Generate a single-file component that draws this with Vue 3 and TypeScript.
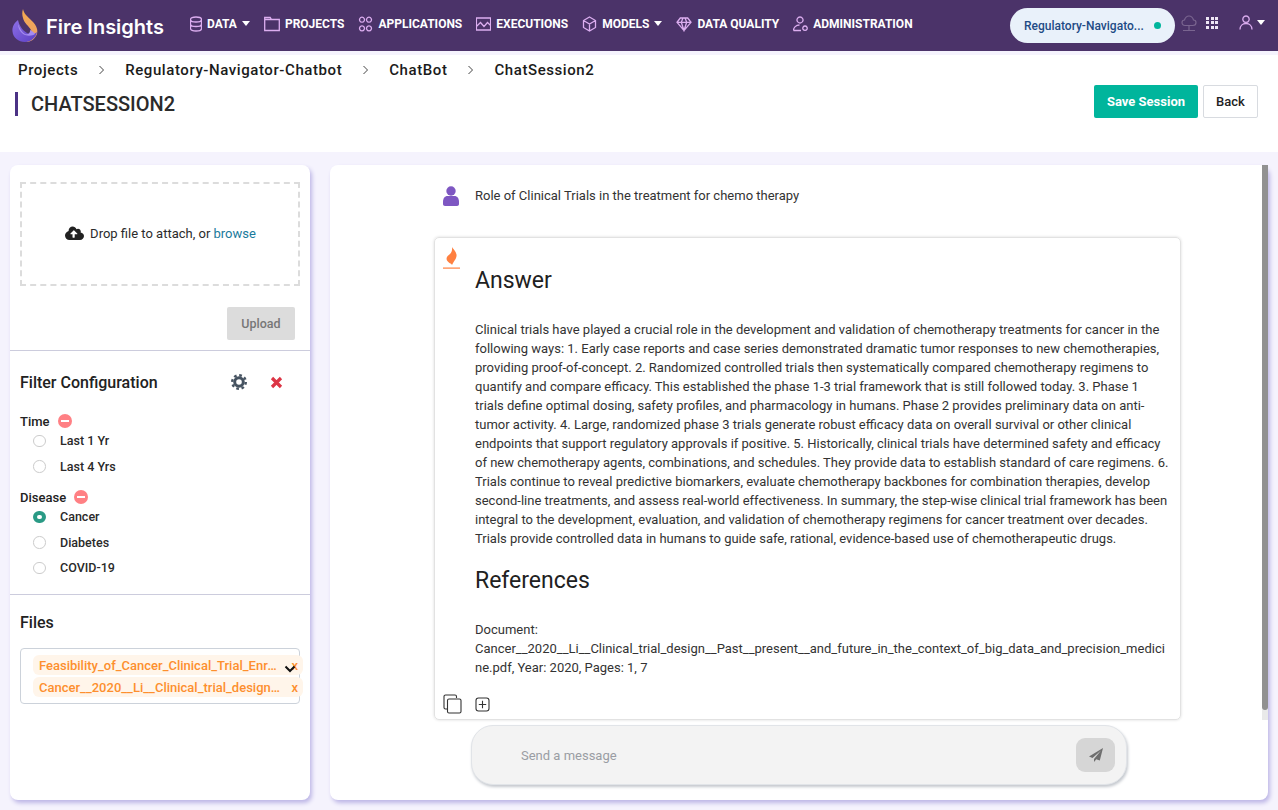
<template>
  <div class="page">
    <header class="topbar">
      <div class="logo">
        <svg width="26" height="33" viewBox="0 0 26 33">
          <defs>
            <linearGradient id="flameTop" x1="0" y1="0" x2="0" y2="1">
              <stop offset="0" stop-color="#f5a94e" />
              <stop offset="1" stop-color="#e9a06a" />
            </linearGradient>
            <linearGradient id="flameLow" x1="0" y1="0" x2="1" y2="1">
              <stop offset="0" stop-color="#8d6fe6" />
              <stop offset="1" stop-color="#5b3fc4" />
            </linearGradient>
          </defs>
          <path d="M11 0c1 5 4 7 9 12 5 5 6 9 5 13-2 5-6 8-11 8 5-3 7-7 5-12-2-4-7-7-8-12-1-3-1-6 0-9z" fill="url(#flameTop)" />
          <path d="M6 11C2 14 0 18 .5 22.500c.5 6 6 10.500 12.500 10.500 6 0 11-4.500 12-10-3 3-7 3-10 1-5-3-8-8-9-13z" fill="url(#flameLow)" />
          <path d="M6 15c0 5 3 9 7 11 4 1.500 8 .5 10-1-1-2-3-3-5-4 .5 3-2 5-5 4-3-1.500-5-5.500-7-10z" fill="#a58cf0" />
        </svg>
        <span>Fire Insights</span>
      </div>
      <nav class="nav">
        <a v-for="item in navItems" :key="item.label" class="nav-item">
          <svg class="nav-icon" :width="item.w" height="16" :viewBox="`${(16 - item.w) / 2} 0 ${item.w} 16`"><path :d="item.icon" /></svg>
          <span>{{ item.label }}</span>
          <i v-if="item.caret" class="caret"></i>
        </a>
      </nav>
      <div class="topbar-right">
        <div class="project-pill">
          <span>Regulatory-Navigato...</span>
          <i class="dot"></i>
        </div>
        <svg class="cloud-net" width="16" height="18" viewBox="0 0 16 18">
          <path d="M4 10.500C2 10.500 1 9 1 7.500S2 5 3.500 5C4 3 6 1 8 1s4 2 4.500 4C14 5 15 6 15 7.500s-1 3-3 3zM8 10.500V16M2 15.500h12" />
        </svg>
        <div class="grid-icon">
          <i v-for="n in 9" :key="n"></i>
        </div>
        <div class="user-menu">
          <svg width="14" height="15" viewBox="0 0 14 15">
            <path d="M7 1a3.200 3.200 0 1 0 .01 0zM1 14.500c0-3.500 2.500-6 6-6s6 2.500 6 6" />
          </svg>
          <i class="caret"></i>
        </div>
      </div>
    </header>
    <div class="strip"></div>

    <section class="head">
      <div class="head-left">
        <div class="crumbs">
          <template v-for="(c, i) in crumbs" :key="c">
            <span>{{ c }}</span>
            <svg v-if="i < crumbs.length - 1" width="7" height="10" viewBox="0 0 7 10"><path d="M1.500 1l4 4-4 4" /></svg>
          </template>
        </div>
        <h1 class="title">CHATSESSION2</h1>
      </div>
      <div class="head-actions">
        <button class="btn-save">Save Session</button>
        <button class="btn-back">Back</button>
      </div>
    </section>

    <main class="content">
      <aside class="side card">
        <div class="upload-section">
          <div class="dropzone">
            <svg width="20" height="15" viewBox="0 0 20 15">
              <path d="M16.600 6.600C16.700 6.300 16.800 6 16.800 5.600c0-1.600-1.300-2.800-2.800-2.800-.6 0-1.100.2-1.500.5C11.700 1.600 10.300.6 8.700.6 6.400.6 4.600 2.400 4.600 4.700v.3C2.700 5.700 1 7.400 1 9.500c0 2.500 2 4.500 4.500 4.500h10.500c2.200 0 4-1.800 4-4 0-1.700-1.400-3.200-3.400-3.400zM12.300 8.300H10.700v3c0 .3-.2.5-.5.5H9c-.3 0-.5-.2-.5-.5v-3H6.900c-.4 0-.7-.5-.4-.8l3-3c.2-.2.5-.2.7 0l3 3c.4.3.1.8-.3.8z" />
            </svg>
            <span>Drop file to attach, or <a>browse</a></span>
          </div>
          <div class="upload-row">
            <button class="btn-upload">Upload</button>
          </div>
        </div>

        <div class="filter-section">
          <div class="filter-head">
            <h3>Filter Configuration</h3>
            <svg class="gear" width="16" height="16" viewBox="0 0 16 16">
              <circle cx="8" cy="8" r="4.300" fill="none" stroke="#465361" stroke-width="3" />
              <circle cx="8" cy="8" r="6.800" fill="none" stroke="#465361" stroke-width="2.400" stroke-dasharray="2.700 2.640" />
            </svg>
            <svg class="close" width="13" height="13" viewBox="0 0 13 13">
              <path d="M2 2l9 9M11 2l-9 9" />
            </svg>
          </div>

          <div v-for="group in filters" :key="group.name" class="filter-group">
            <div class="group-name">
              {{ group.name }}
              <span class="minus"><i></i></span>
            </div>
            <div v-for="opt in group.options" :key="opt" class="radio-row">
              <i class="radio" :class="{ on: opt === 'Cancer' }"></i>
              <span>{{ opt }}</span>
            </div>
          </div>
        </div>

        <div class="files-section">
          <h3>Files</h3>
          <div class="file-box">
            <div v-for="f in files" :key="f" class="chip">
              <span>{{ f }}</span>
              <b>x</b>
            </div>
            <svg class="chevron" width="12" height="8" viewBox="0 0 12 8"><path d="M1.500 1.500L6 6l4.500-4.500" /></svg>
          </div>
        </div>
      </aside>

      <section class="chat card">
        <div class="chat-body">
          <div class="question">
            <svg width="16" height="20" viewBox="0 0 16 20">
              <circle cx="8" cy="5" r="4.700" />
              <path d="M0 16c0-4 2-6 4.500-6h7c2.500 0 4.500 2 4.500 6v2c0 1-.8 2-2 2H2c-1.200 0-2-1-2-2z" />
            </svg>
            <span>Role of Clinical Trials in the treatment for chemo therapy</span>
          </div>

          <article class="answer">
            <svg class="answer-mark" width="18" height="22" viewBox="0 0 18 22">
              <path d="M9 0c1 2 4 4 4.500 7.500C14 11 11.500 13 9 18c-.5-1.500-3.500-2-5-4.500C2.500 10.500 5 8.500 7 7 8.500 5.500 9.500 3 9 0z" fill="#ff8040" />
              <rect x="0" y="20.500" width="17" height="1.200" fill="#ff8040" />
            </svg>
            <h2>Answer</h2>
            <p class="answer-text">{{ answer }}</p>
            <h2 class="refs-title">References</h2>
            <p class="refs">Document: Cancer__2020__Li__Clinical_trial_design__Past__present__and_future_in_the_context_of_big_data_and_precision_medicine.pdf, Year: 2020, Pages: 1, 7</p>
            <div class="answer-tools">
              <svg width="19" height="20" viewBox="0 0 19 20">
                <path d="M4 15H2.500A1.500 1.500 0 0 1 1 13.500V2.500A1.500 1.500 0 0 1 2.500 1H12a1.500 1.500 0 0 1 1.500 1.500V4" />
                <rect x="4.500" y="5" width="13.500" height="14" rx="1.500" />
              </svg>
              <svg width="15" height="15" viewBox="0 0 15 15">
                <rect x="1" y="1" width="13" height="13" rx="2.500" />
                <path d="M7.500 3.800v7.400M3.800 7.500h7.400" />
              </svg>
            </div>
          </article>

          <div class="composer">
            <span class="placeholder">Send a message</span>
            <button class="send">
              <svg width="14" height="14" viewBox="0 0 14 14">
                <path d="M14 0L0 8.500l3.500 1.500L12 2.500 5 11v3l2.300-2.700 3.500 1.200z" />
              </svg>
            </button>
          </div>
        </div>
        <div class="scrollbar"><i></i></div>
      </section>
    </main>
  </div>
</template>

<script setup lang="ts">
interface NavItem {
  label: string
  icon: string
  w: number
  caret?: boolean
}

const navItems: NavItem[] = [
  {
    label: 'DATA',
    caret: true,
    w: 12,
    icon: 'M2.500 3.500C2.500 2 4.800 1 8 1s5.500 1 5.500 2.500v9c0 1.500-2.300 2.500-5.500 2.500s-5.500-1-5.500-2.500zM2.500 3.500C2.500 5 4.800 6 8 6s5.500-1 5.500-2.500M2.500 8c0 1.500 2.300 2.500 5.500 2.500s5.500-1 5.500-2.500',
  },
  { label: 'PROJECTS', w: 16, icon: 'M.7 1.500h5.500L7.500 3.500h7.800v11H.7zM.7 3.500h6.800' },
  {
    label: 'APPLICATIONS',
    w: 15,
    icon: 'M4.500 1.200a2.500 2.500 0 1 0 .01 0zM11.500 1.200a2.500 2.500 0 1 0 .01 0zM4.500 9.800a2.500 2.500 0 1 0 .01 0zM11.500 9.800a2.500 2.500 0 1 0 .01 0z',
  },
  { label: 'EXECUTIONS', w: 15, icon: 'M.9 2h14.200v12H.9zM.9 10.500L5 6.500l3.500 4L12 6.500l3.100 3' },
  { label: 'MODELS', caret: true, w: 15, icon: 'M8 1l6 3.500v7L8 15l-6-3.500v-7zM2 4.500L8 8l6-3.500M8 8v7' },
  { label: 'DATA QUALITY', w: 16, icon: 'M4.300 2h7.400L15 6.300 8 14.500 1 6.300zM1 6.300h14M5.300 6.300L8 14.500l2.700-8.200M5.300 6.300L7 2M10.700 6.300L9 2' },
  {
    label: 'ADMINISTRATION',
    w: 15,
    icon: 'M7.500 1a3 3 0 1 0 .01 0zM1 14.500c0-3 2.500-5.500 6-5.500M1 14.500h7.500M12.500 10a2.200 2.200 0 1 0 .01 0z',
  },
]

const crumbs = ['Projects', 'Regulatory-Navigator-Chatbot', 'ChatBot', 'ChatSession2']

const filters = [
  { name: 'Time', options: ['Last 1 Yr', 'Last 4 Yrs'] },
  { name: 'Disease', options: ['Cancer', 'Diabetes', 'COVID-19'] },
]

const files = ['Feasibility_of_Cancer_Clinical_Trial_Enrollment_Criteria.pdf', 'Cancer__2020__Li__Clinical_trial_design__Past.pdf']

const answer =
  'Clinical trials have played a crucial role in the development and validation of chemotherapy treatments for cancer in the following ways: 1. Early case reports and case series demonstrated dramatic tumor responses to new chemotherapies, providing proof-of-concept. 2. Randomized controlled trials then systematically compared chemotherapy regimens to quantify and compare efficacy. This established the phase 1-3 trial framework that is still followed today. 3. Phase 1 trials define optimal dosing, safety profiles, and pharmacology in humans. Phase 2 provides preliminary data on anti-tumor activity. 4. Large, randomized phase 3 trials generate robust efficacy data on overall survival or other clinical endpoints that support regulatory approvals if positive. 5. Historically, clinical trials have determined safety and efficacy of new chemotherapy agents, combinations, and schedules. They provide data to establish standard of care regimens. 6. Trials continue to reveal predictive biomarkers, evaluate chemotherapy backbones for combination therapies, develop second-line treatments, and assess real-world effectiveness. In summary, the step-wise clinical trial framework has been integral to the development, evaluation, and validation of chemotherapy regimens for cancer treatment over decades. Trials provide controlled data in humans to guide safe, rational, evidence-based use of chemotherapeutic drugs.'
</script>

<style>
html,
body {
  margin: 0;
  background: #f5f3fd;
}
</style>

<style scoped>
.page {
  width: 1278px;
  height: 810px;
  overflow: hidden;
  display: flex;
  flex-direction: column;
  background: #f5f3fd;
  font-family: Roboto, 'Liberation Sans', sans-serif;
  color: #212529;
}

.topbar {
  height: 51px;
  flex: none;
  display: flex;
  align-items: center;
  background: #4b3369;
  padding: 0 13px 0 12px;
  box-sizing: border-box;
}

.logo {
  display: flex;
  align-items: center;
  gap: 8px;
  width: 178px;
  color: #fff;
  font-family: Inter, sans-serif;
  font-size: 20px;
  font-weight: 600;
}

.logo span {
  margin-top: 3px;
}

.nav {
  display: flex;
  align-items: center;
  gap: 14px;
  margin-top: -4px;
}

.nav-item {
  display: flex;
  align-items: center;
  gap: 5px;
  color: #fff;
  font-size: 12px;
  font-weight: 700;
}

.nav-icon path {
  fill: none;
  stroke: #dcaef0;
  stroke-width: 1.300;
}

.caret {
  display: inline-block;
  width: 0;
  height: 0;
  border-left: 4.500px solid transparent;
  border-right: 4.500px solid transparent;
  border-top: 5px solid #fff;
}

.topbar-right {
  margin-left: auto;
  display: flex;
  align-items: center;
}

.project-pill {
  width: 165px;
  height: 35px;
  border-radius: 18px;
  background: #e9f1fa;
  display: flex;
  align-items: center;
  justify-content: space-between;
  padding: 0 14px 0 14px;
  box-sizing: border-box;
  color: #1e4b85;
  font-size: 12px;
  font-weight: 500;
}

.dot {
  width: 7px;
  height: 7px;
  border-radius: 50%;
  background: #00b59c;
}

.cloud-net {
  margin-left: 6px;
  margin-top: -3px;
}

.cloud-net path {
  fill: none;
  stroke: #7a6590;
  stroke-width: 1.200;
}

.grid-icon {
  display: grid;
  grid-template-columns: repeat(3, 3px);
  gap: 1.500px;
  margin: -6px 0 0 9px;
}

.grid-icon i {
  width: 3px;
  height: 3px;
  background: #eee6f5;
}

.user-menu {
  display: flex;
  align-items: center;
  gap: 4px;
  margin: -6px 0 0 21px;
}

.user-menu path {
  fill: none;
  stroke: #dcaef0;
  stroke-width: 1.300;
}

.strip {
  height: 4px;
  flex: none;
  background: #f5f3fd;
}

.head {
  height: 97px;
  flex: none;
  background: #fff;
  display: flex;
  justify-content: space-between;
  padding: 0 20px 0 15px;
  box-sizing: border-box;
}

.crumbs {
  display: flex;
  align-items: center;
  height: 28px;
  margin-left: 3px;
  margin-top: 1px;
  gap: 20px;
  font-size: 15px;
  font-weight: 500;
  letter-spacing: 0.58px;
  color: #1b1b1b;
}

.crumbs path {
  fill: none;
  stroke: #444;
  stroke-width: 1;
}

.title {
  margin: 8px 0 0;
  height: 24px;
  line-height: 24px;
  border-left: 3px solid #4b3285;
  padding-left: 13px;
  font-size: 20px;
  font-weight: 500;
  color: #2b2b2b;
}

.head-actions {
  display: flex;
  gap: 5px;
  margin-top: 30px;
  align-items: flex-start;
}

button {
  font-family: inherit;
  border: none;
  cursor: pointer;
}

.btn-save {
  width: 104px;
  height: 33px;
  background: #00b59c;
  color: #fff;
  border-radius: 2px;
  font-size: 13px;
  font-weight: 700;
}

.btn-back {
  width: 55px;
  height: 33px;
  background: #fff;
  border: 1px solid #d8dbe0;
  border-radius: 2px;
  color: #222;
  font-size: 13px;
  font-weight: 500;
}

.content {
  flex: 1;
  min-height: 0;
  display: flex;
  gap: 20px;
  padding: 13px 10px 10px;
}

.card {
  background: #fff;
  border-radius: 8px;
  box-shadow: 2px 3px 4px #bdb6e6;
}

.side {
  width: 300px;
  flex: none;
  display: flex;
  flex-direction: column;
}

.upload-section {
  padding: 17px 10px 10px;
  border-bottom: 1px solid #ccd;
  height: 186px;
  box-sizing: border-box;
}

.dropzone {
  height: 104px;
  border: 2px dashed #dcdcdc;
  box-sizing: border-box;
  padding-bottom: 2px;
  display: flex;
  align-items: center;
  justify-content: center;
  gap: 6px;
  font-size: 13px;
  color: #2b2b2b;
}

.dropzone path {
  fill: #212121;
}

.dropzone a {
  color: #1a7a9c;
}

.upload-row {
  display: flex;
  justify-content: flex-end;
  padding: 21px 5px 0 0;
}

.btn-upload {
  width: 68px;
  height: 33px;
  background: #dcdcdc;
  color: #777;
  border-radius: 2px;
  font-size: 12.500px;
  font-weight: 500;
}

.filter-section {
  padding: 0 10px;
  height: 244px;
  box-sizing: border-box;
  border-bottom: 1px solid #ccd;
}

.filter-head {
  display: flex;
  align-items: center;
  height: 32px;
  margin-top: 15px;
}

h3 {
  margin: 0;
  font-size: 16px;
  font-weight: 500;
  color: #222;
}

.gear {
  margin-left: auto;
}

.close {
  margin: 0 17px 0 23px;
}

.close path {
  fill: none;
  stroke: #dc3545;
  stroke-width: 3.200;
}

.filter-group {
  margin-bottom: 9px;
}

.filter-head + .filter-group {
  margin-top: 14px;
}

.group-name {
  display: flex;
  align-items: center;
  gap: 8px;
  height: 18px;
  margin-bottom: -2px;
  font-size: 13px;
  font-weight: 500;
  color: #222;
}

.minus {
  width: 14px;
  height: 14px;
  border-radius: 50%;
  background: #ff8084;
  display: flex;
  align-items: center;
  justify-content: center;
}

.minus i {
  width: 8px;
  height: 2.500px;
  background: #fff;
}

.radio-row {
  display: flex;
  align-items: center;
  height: 25.500px;
  padding-left: 13px;
  gap: 14.500px;
  font-size: 12.500px;
  font-weight: 500;
  color: #2a2a2a;
}

.radio {
  width: 12.500px;
  height: 12.500px;
  box-sizing: border-box;
  border-radius: 50%;
  border: 1px solid #ccc;
  background: #fff;
}

.radio.on {
  border: 4px solid #2a9a85;
}

.files-section {
  padding: 18px 10px 0;
}

.file-box {
  position: relative;
  margin-top: 16px;
  width: 280px;
  height: 56px;
  box-sizing: border-box;
  border: 1px solid #ccd2da;
  border-radius: 4px;
  padding: 6px 0 0 12px;
  display: flex;
  flex-direction: column;
  gap: 2px;
}

.chip {
  width: 270px;
  height: 20px;
  flex: none;
  box-sizing: border-box;
  background: #fff5ea;
  border-radius: 6px;
  padding: 0 5px 0 6px;
  display: flex;
  align-items: center;
  justify-content: space-between;
  color: #fd8f2e;
  font-size: 13px;
  font-weight: 500;
}

.chip span {
  width: 243px;
  white-space: nowrap;
  overflow: hidden;
  text-overflow: ellipsis;
}

.chip b {
  font-weight: 500;
}

.chevron {
  position: absolute;
  top: 16px;
  right: 3px;
}

.chevron path {
  fill: none;
  stroke: #111;
  stroke-width: 2;
}

.chat {
  flex: 1;
  min-width: 0;
  display: flex;
  position: relative;
}

.chat-body {
  flex: 1;
  min-width: 0;
  padding: 21px 0 0 104px;
}

.question {
  display: flex;
  align-items: center;
  gap: 16px;
  padding-left: 9px;
  height: 20px;
  font-size: 13px;
  color: #333;
}

.question span {
  margin-top: -2px;
}

.question path,
.question circle {
  fill: #7e57c2;
}

.answer {
  position: relative;
  width: 747px;
  height: 483px;
  box-sizing: border-box;
  margin-top: 31px;
  border: 1px solid #e2e2e2;
  border-radius: 5px;
  box-shadow: 0 0 3px rgba(0, 0, 0, 0.15);
  padding: 27px 11.500px 0 40px;
}

.answer-mark {
  position: absolute;
  top: 9px;
  left: 8px;
}

.answer h2 {
  margin: 0;
  font-size: 23px;
  line-height: 32px;
  font-weight: 400;
  color: #212121;
}

.answer-text {
  margin: 23px 0 0;
  font-size: 13px;
  line-height: 19px;
  color: #333;
}

.answer .refs-title {
  margin-top: 17px;
}

.refs {
  margin: 23px 0 0;
  font-size: 13px;
  line-height: 19px;
  color: #333;
  overflow-wrap: break-word;
  width: 692px;
}

.answer-tools {
  position: absolute;
  left: 8px;
  bottom: 5px;
  display: flex;
  align-items: center;
  gap: 13px;
}

.answer-tools path,
.answer-tools rect {
  fill: none;
  stroke: #333;
  stroke-width: 1.100;
}

.composer {
  width: 656px;
  height: 60px;
  box-sizing: border-box;
  margin: 5px 0 0 37px;
  background: #f3f3f3;
  border: 1px solid #e1e4e8;
  border-radius: 22px;
  box-shadow: 1px 2px 3px #c4c8ce;
  display: flex;
  align-items: center;
  justify-content: space-between;
  padding: 0 11px 0 49px;
}

.placeholder {
  font-size: 13px;
  color: #9a9da3;
}

.send {
  width: 39px;
  height: 34px;
  background: #d6d6d6;
  border-radius: 9px;
  display: flex;
  align-items: center;
  justify-content: center;
}

.send path {
  fill: #6e6e6e;
}

.scrollbar {
  width: 6px;
  height: 555px;
  flex: none;
  background: #e9e9e9;
}

.scrollbar i {
  display: block;
  height: 545px;
  background: #919191;
  border-radius: 0 0 3px 3px;
}
</style>
